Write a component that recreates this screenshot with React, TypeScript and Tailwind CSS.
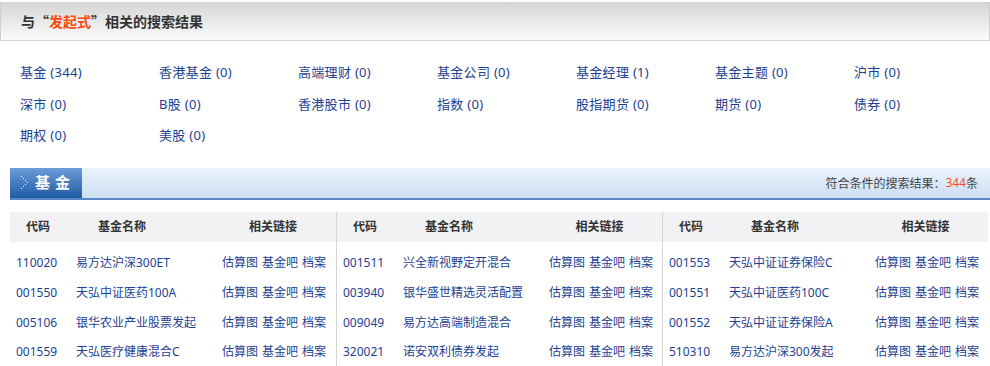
const categories = [
  ["基金", 344],
  ["香港基金", 0],
  ["高端理财", 0],
  ["基金公司", 0],
  ["基金经理", 1],
  ["基金主题", 0],
  ["沪市", 0],
  ["深市", 0],
  ["B股", 0],
  ["香港股市", 0],
  ["指数", 0],
  ["股指期货", 0],
  ["期货", 0],
  ["债券", 0],
  ["期权", 0],
  ["美股", 0],
] as const;

const groups = [
  [
    ["110020", "易方达沪深300ET"],
    ["001550", "天弘中证医药100A"],
    ["005106", "银华农业产业股票发起"],
    ["001559", "天弘医疗健康混合C"],
  ],
  [
    ["001511", "兴全新视野定开混合"],
    ["003940", "银华盛世精选灵活配置"],
    ["009049", "易方达高端制造混合"],
    ["320021", "诺安双利债券发起"],
  ],
  [
    ["001553", "天弘中证证券保险C"],
    ["001551", "天弘中证医药100C"],
    ["001552", "天弘中证证券保险A"],
    ["510310", "易方达沪深300发起"],
  ],
];

function DotArrow() {
  // small dotted chevron in the tab
  const dots = [
    [0, 0], [2, 2], [4, 4], [6, 6], [4, 8], [2, 10], [0, 12],
  ];
  return (
    <svg width="8" height="13" viewBox="0 0 8 13" className="shrink-0">
      {dots.map(([x, y], i) => (
        <rect key={i} x={x} y={y} width="1" height="1" fill="#ffffff" />
      ))}
    </svg>
  );
}

export default function App() {
  return (
    <main className="min-h-screen w-[990px] bg-white font-['Noto_Sans','Noto_Sans_CJK_SC',sans-serif] text-[#333]">
      {/* title bar */}
      <div className="mt-[2px] flex h-[39px] items-center border-x border-b border-[#cfcfcf] bg-gradient-to-b from-[#d5d5d5] to-[#fbfbfb] pl-[20px] font-['Noto_Sans_CJK_SC',sans-serif] text-[14px] font-bold text-[#333]">
        与“<span className="text-[#ff4a0a]">发起式</span>”相关的搜索结果
      </div>

      {/* categories */}
      <div className="grid grid-cols-[repeat(7,139px)] pl-[20px] pt-[16px] text-[13px] text-[#1d3f92]">
        {categories.map(([label, n]) => (
          <a key={label} href="#" className="flex h-[31.5px] items-center whitespace-nowrap tracking-[0.3px]">
            {label} ({n})
          </a>
        ))}
      </div>

      {/* section tab */}
      <div className="ml-[10px] mt-[16px]">
        <div className="flex h-[30px] items-stretch bg-gradient-to-b from-[#e9f3fd] to-[#cddff2]">
          <div className="flex w-[72px] items-center gap-[6px] bg-gradient-to-b from-[#6c9dd9] to-[#1f5ba3] pl-[11px]">
            <DotArrow />
            <span className="font-['Noto_Sans_CJK_SC',sans-serif] text-[15px] font-bold tracking-[5px] text-white">基金</span>
          </div>
          <div className="ml-auto flex items-center pr-[12px] font-['Noto_Sans_CJK_SC',sans-serif] text-[12px] text-[#444]">
            符合条件的搜索结果：<span className="font-['Noto_Sans',sans-serif] text-[#ff4a2a]">344</span>条
          </div>
        </div>
        <div className="h-[2px] bg-[#5b86c4]" />
      </div>

      {/* results table */}
      <div className="ml-[10px] mt-[12px] flex w-[978px]">
        {groups.map((rows, gi) => (
          <div key={gi} className={gi > 0 ? "w-[326px] border-l border-[#d4d4d4]" : "w-[326px]"}>
            <div className="grid h-[30px] grid-cols-[56px_112px_1fr] items-center bg-[#f2f2f4] text-[12px] font-bold text-[#333]">
              <div className="text-center">代码</div>
              <div className="text-center">基金名称</div>
              <div className="pl-[32px] text-center">相关链接</div>
            </div>
            <div className="pt-[7px]">
              {rows.map(([code, name]) => (
                <div key={code} className="grid h-[29.7px] grid-cols-[56px_146px_1fr] items-center text-[12px] text-[#1d3f92]">
                  <div className="pl-[6px]">{code}</div>
                  <a href="#" className="whitespace-nowrap pl-[10px]">{name}</a>
                  <div className="flex gap-[4px] whitespace-nowrap pl-[10px]">
                    <a href="#">估算图</a>
                    <a href="#">基金吧</a>
                    <a href="#">档案</a>
                  </div>
                </div>
              ))}
            </div>
          </div>
        ))}
      </div>
    </main>
  );
}
